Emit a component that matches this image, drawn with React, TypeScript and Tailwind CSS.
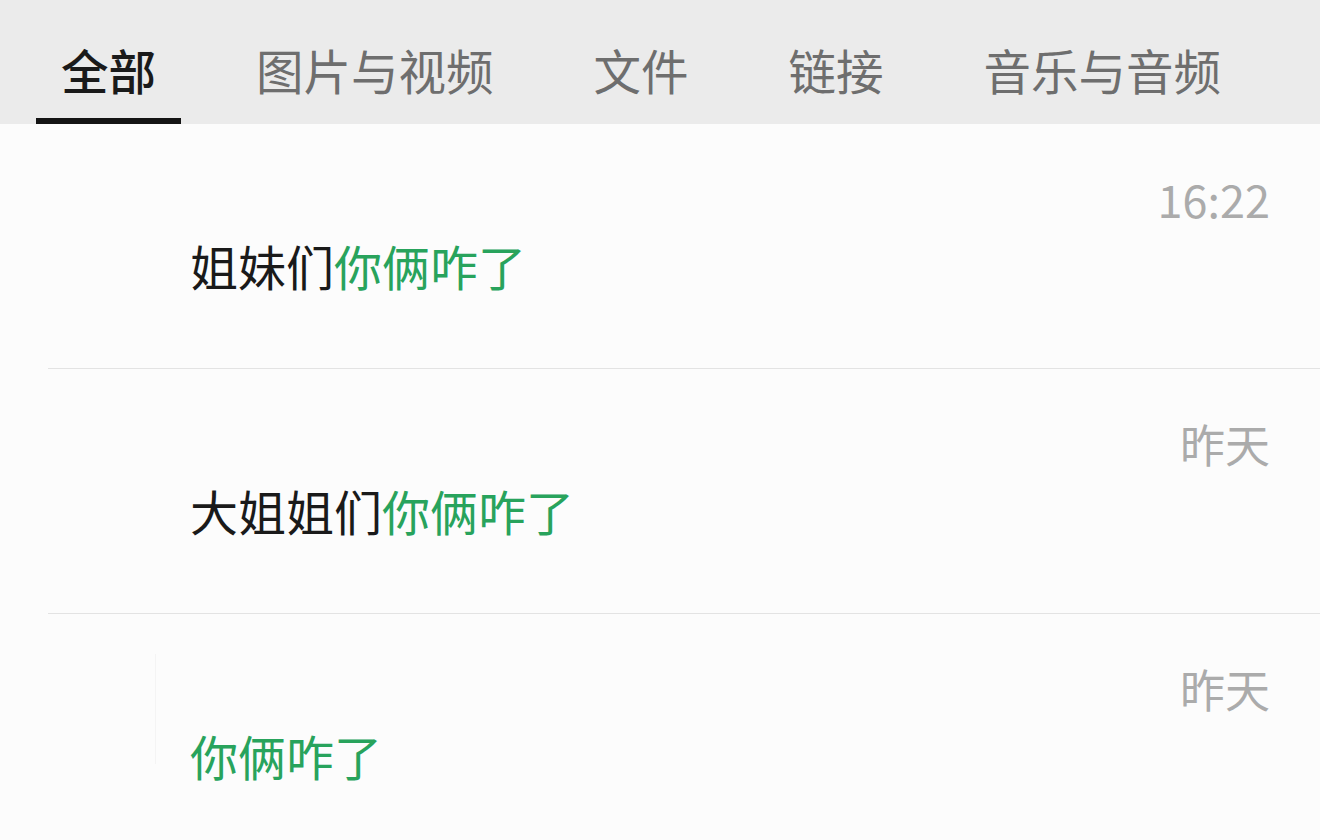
const tabs = ["全部", "图片与视频", "文件", "链接", "音乐与音频"];

type Item = { time: string; prefix: string; hit: string };

const items: Item[] = [
  { time: "16:22", prefix: "姐妹们", hit: "你俩咋了" },
  { time: "昨天", prefix: "大姐姐们", hit: "你俩咋了" },
  { time: "昨天", prefix: "", hit: "你俩咋了" },
];

const font = { fontFamily: '"Noto Sans CJK SC", "Noto Sans", sans-serif' };

export default function App() {
  return (
    <div className="w-[1320px] h-[840px] overflow-hidden bg-[#fcfcfc]" style={font}>
      {/* Tabs */}
      <div className="h-[124px] bg-[#ebebeb] flex items-end pl-[36px] gap-[50px]">
        {tabs.map((tab, idx) => (
          <div
            key={tab}
            className={`h-[124px] px-[25px] pt-[22px] flex items-center border-b-[6px] text-[47.5px] leading-none ${
              idx === 0
                ? "border-[#141414] text-[#1a1a1a] font-medium"
                : "border-transparent text-[#6e6e6e]"
            }`}
          >
            <span>{tab}</span>
          </div>
        ))}
      </div>

      {/* Results */}
      <div>
        {items.map((item, idx) => (
          <div key={idx} className="relative h-[245px]">
            {idx === 2 && (
              <div className="absolute left-[155px] top-[40px] h-[110px] w-px bg-[#f4f4f4]" />
            )}
            <div className="flex justify-end pr-[50px] pt-[52px]">
              <span className="text-[#ababab] text-[45px] leading-[46px]">{item.time}</span>
            </div>
            <div className="pl-[190px] mt-[19px] text-[48px] leading-[48px] text-[#1a1a1a]">
              {item.prefix}
              <span className="text-[#28a35c]">{item.hit}</span>
            </div>
            {idx < items.length - 1 && (
              <div className="absolute left-[48px] right-0 bottom-0 h-px bg-[#e3e3e3]" />
            )}
          </div>
        ))}
      </div>
    </div>
  );
}
